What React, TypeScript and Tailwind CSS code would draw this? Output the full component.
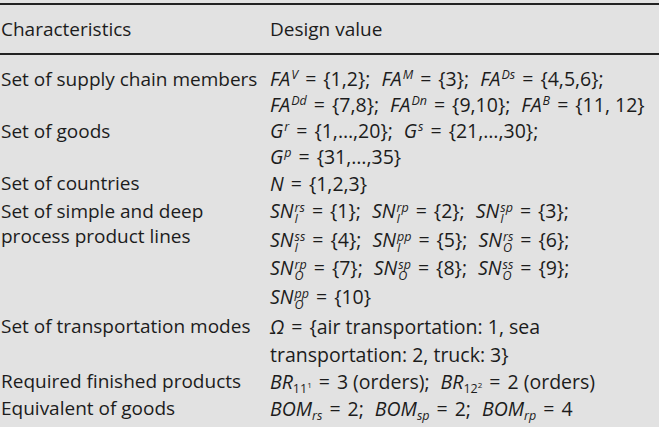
import React from "react";

const I = ({ children }: { children: React.ReactNode }) => <i className="italic">{children}</i>;

const Eq = () => <span className="mx-[7px]">=</span>;
const Sep = () => (
  <>
    ;<span className="inline-block w-[11px]" />
  </>
);

const Sup = ({ b, sup }: { b: string; sup: string }) => (
  <span className="whitespace-nowrap">
    <i>{b}</i>
    <span className="inline-block align-[7px] leading-none text-[12.5px] italic ml-px">{sup}</span>
  </span>
);

const Stk = ({ b, sup, sub }: { b: string; sup: string; sub: string }) => (
  <span className="whitespace-nowrap">
    <i>{b}</i>
    <span className="inline-block align-[-5px] leading-[11px] text-[12.5px] italic ml-px">
      <span className="block">{sup}</span>
      <span className="block">{sub}</span>
    </span>
  </span>
);

const Sub = ({ b, sub }: { b: string; sub: React.ReactNode }) => (
  <span className="whitespace-nowrap">
    <i>{b}</i>
    <span className="inline-block align-[-4px] leading-none text-[12.5px] italic">{sub}</span>
  </span>
);

type Line = { l?: React.ReactNode; r?: React.ReactNode; h: string };

const lines: Line[] = [
  {
    h: "h-[26px] leading-[26px]",
    l: "Set of supply chain members",
    r: (
      <>
        <Sup b="FA" sup="V" />
        <Eq />
        {"{1,2}"}
        <Sep />
        <Sup b="FA" sup="M" />
        <Eq />
        {"{3}"}
        <Sep />
        <Sup b="FA" sup="Ds" />
        <Eq />
        {"{4,5,6};"}
      </>
    ),
  },
  {
    h: "h-[26px] leading-[26px]",
    r: (
      <>
        <Sup b="FA" sup="Dd" />
        <Eq />
        {"{7,8}"}
        <Sep />
        <Sup b="FA" sup="Dn" />
        <Eq />
        {"{9,10}"}
        <Sep />
        <Sup b="FA" sup="B" />
        <Eq />
        {"{11, 12}"}
      </>
    ),
  },
  {
    h: "h-[26px] leading-[26px]",
    l: "Set of goods",
    r: (
      <>
        <Sup b="G" sup="r" />
        <Eq />
        {"{1,…,20}"}
        <Sep />
        <Sup b="G" sup="s" />
        <Eq />
        {"{21,…,30};"}
      </>
    ),
  },
  {
    h: "h-[26px] leading-[26px]",
    r: (
      <>
        <Sup b="G" sup="p" />
        <Eq />
        {"{31,…,35}"}
      </>
    ),
  },
  {
    h: "h-[27px] leading-[27px]",
    l: "Set of countries",
    r: (
      <>
        <I>N</I>
        <Eq />
        {"{1,2,3}"}
      </>
    ),
  },
  {
    h: "h-[28px] leading-[28px]",
    l: "Set of simple and deep",
    r: (
      <>
        <Stk b="SN" sup="rs" sub="I" />
        <Eq />
        {"{1}"}
        <Sep />
        <Stk b="SN" sup="rp" sub="I" />
        <Eq />
        {"{2}"}
        <Sep />
        <Stk b="SN" sup="sp" sub="I" />
        <Eq />
        {"{3};"}
      </>
    ),
  },
  {
    h: "h-[29px] leading-[29px]",
    l: <span className="relative -top-[3px]">process product lines</span>,
    r: (
      <>
        <Stk b="SN" sup="ss" sub="I" />
        <Eq />
        {"{4}"}
        <Sep />
        <Stk b="SN" sup="pp" sub="I" />
        <Eq />
        {"{5}"}
        <Sep />
        <Stk b="SN" sup="rs" sub="O" />
        <Eq />
        {"{6};"}
      </>
    ),
  },
  {
    h: "h-[28px] leading-[28px]",
    r: (
      <>
        <Stk b="SN" sup="rp" sub="O" />
        <Eq />
        {"{7}"}
        <Sep />
        <Stk b="SN" sup="sp" sub="O" />
        <Eq />
        {"{8}"}
        <Sep />
        <Stk b="SN" sup="ss" sub="O" />
        <Eq />
        {"{9};"}
      </>
    ),
  },
  {
    h: "h-[30px] leading-[30px]",
    r: (
      <>
        <Stk b="SN" sup="pp" sub="O" />
        <Eq />
        {"{10}"}
      </>
    ),
  },
  {
    h: "h-[29px] leading-[29px]",
    l: "Set of transportation modes",
    r: (
      <>
        <I>Ω</I>
        <Eq />
        {"{air transportation: 1, sea"}
      </>
    ),
  },
  {
    h: "h-[27px] leading-[27px]",
    r: <>transportation: 2, truck: 3{"}"}</>,
  },
  {
    h: "h-[27px] leading-[27px]",
    l: "Required finished products",
    r: (
      <>
        <Sub
          b="BR"
          sub={
            <>
              <span className="not-italic">11</span>
              <span className="inline-block align-[5px] text-[8px] not-italic">1</span>
            </>
          }
        />
        <Eq />
        {"3 (orders)"}
        <Sep />
        <Sub
          b="BR"
          sub={
            <>
              <span className="not-italic">12</span>
              <span className="inline-block align-[5px] text-[8px] not-italic">2</span>
            </>
          }
        />
        <Eq />
        {"2 (orders)"}
      </>
    ),
  },
  {
    h: "h-[27px] leading-[27px]",
    l: "Equivalent of goods",
    r: (
      <>
        <Sub b="BOM" sub="rs" />
        <Eq />
        {"2"}
        <Sep />
        <Sub b="BOM" sub="sp" />
        <Eq />
        {"2"}
        <Sep />
        <Sub b="BOM" sub="rp" />
        <Eq />
        {"4"}
      </>
    ),
  },
];

export default function App() {
  return (
    <div
      className="w-[659px] h-[427px] bg-[#e2e2e2] text-[#1c1c1c] text-[19px] overflow-hidden"
      style={{ fontFamily: '"Open Sans", "Noto Sans", sans-serif' }}
    >
      <div className="pt-[3px]">
        <div className="border-t-2 border-[#222]" />
        <div className="flex h-[48px] items-center">
          <div className="w-[270px] shrink-0 pl-px">Characteristics</div>
          <div>Design value</div>
        </div>
        <div className="border-t-2 border-[#222]" />
        <div className="pt-[11px] flex flex-col">
          {lines.map((ln, i) => (
            <div key={i} className={`flex whitespace-nowrap ${ln.h}`}>
              <div className="w-[270px] shrink-0 pl-px">{ln.l}</div>
              <div className="text-[19.5px]">{ln.r}</div>
            </div>
          ))}
        </div>
      </div>
    </div>
  );
}
